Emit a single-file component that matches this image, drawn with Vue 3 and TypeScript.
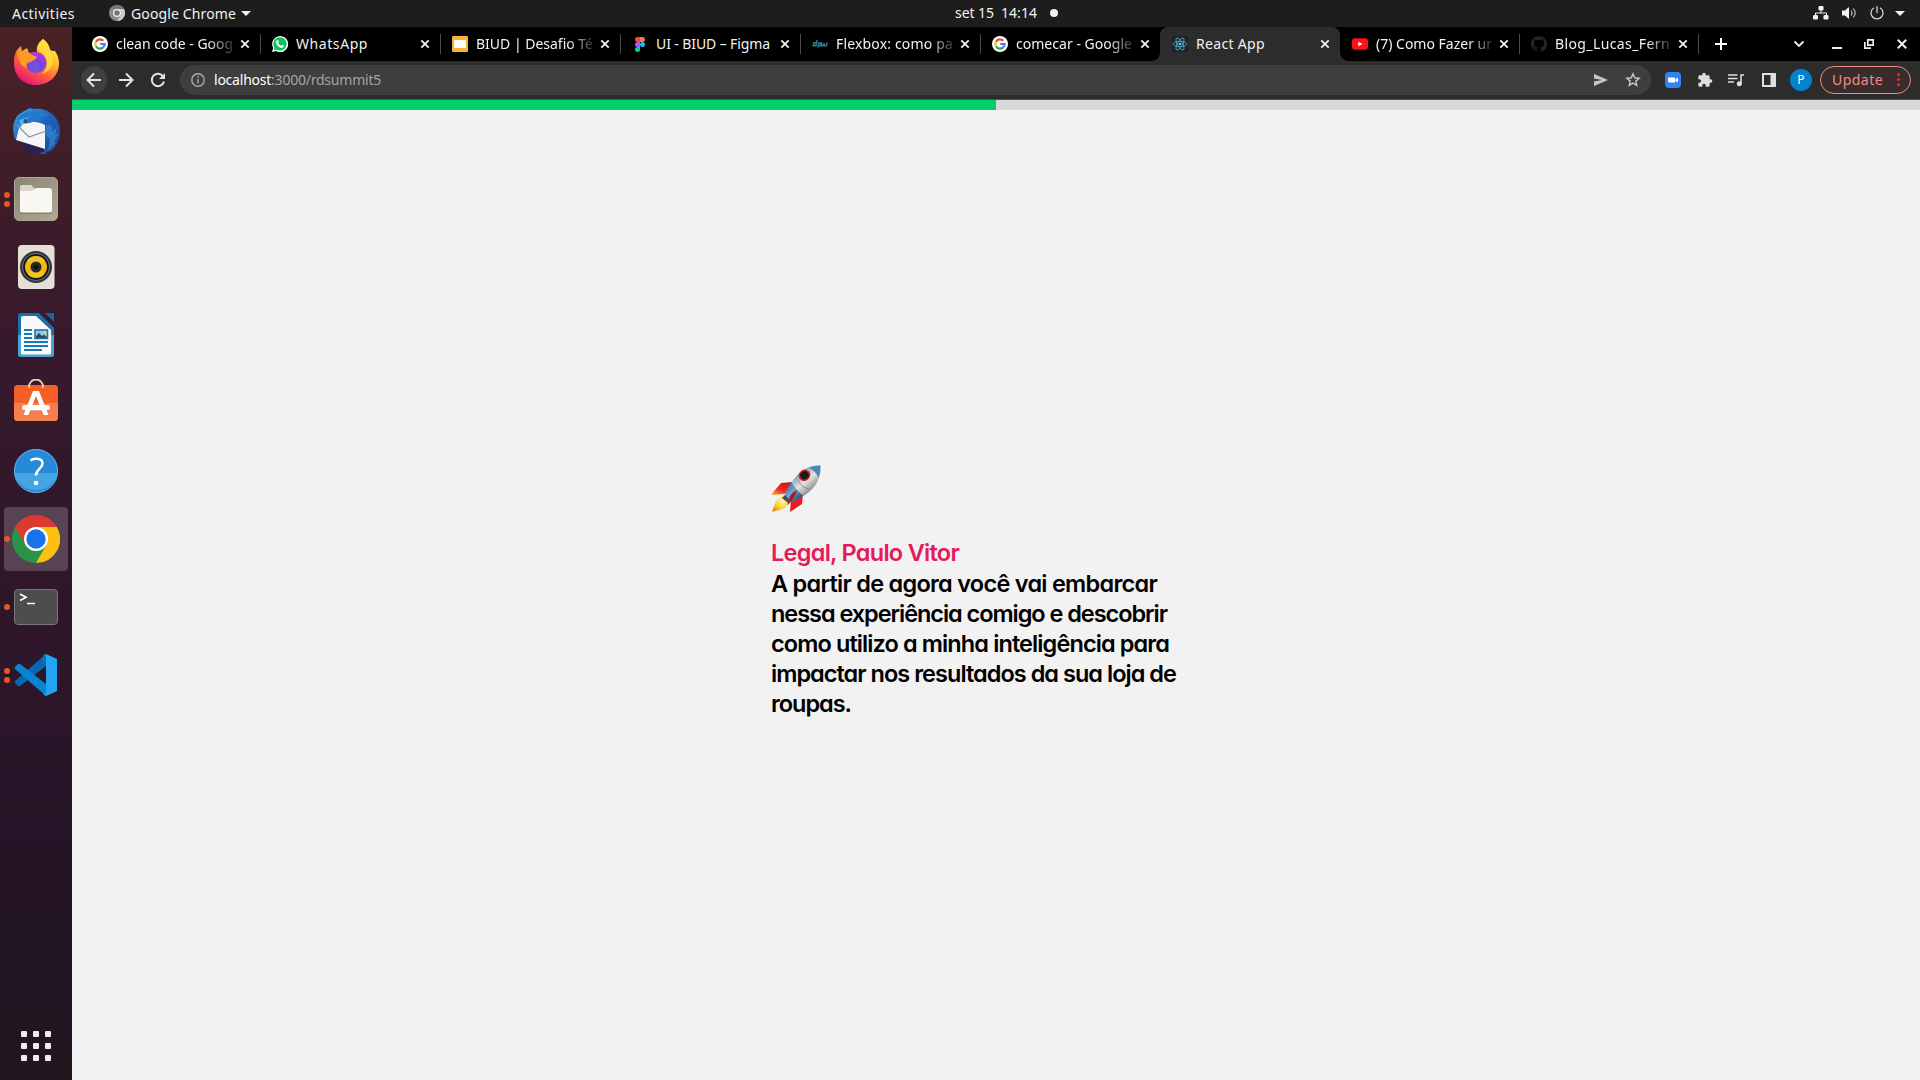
<script setup lang="ts">
import type { Directive } from 'vue'

interface Tab {
  icon: string
  title: string
  width: number
  span: number
  active?: boolean
}

interface DockItem {
  name: string
  dots: number
  active?: boolean
}

const tabs: Tab[] = [
  { icon: 'google', title: 'clean code - Goog', width: 180, span: 117 },
  { icon: 'whatsapp', title: 'WhatsApp', width: 180, span: 72 },
  { icon: 'slides', title: 'BIUD | Desafio Té', width: 180, span: 117 },
  { icon: 'figma', title: 'UI - BIUD – Figma', width: 180, span: 114 },
  { icon: 'dpw', title: 'Flexbox: como pa', width: 180, span: 117 },
  { icon: 'google', title: 'comecar - Google', width: 180, span: 116 },
  { icon: 'react', title: 'React App', width: 180, span: 69, active: true },
  { icon: 'youtube', title: '(7) Como Fazer ur', width: 179, span: 116 },
  { icon: 'github', title: 'Blog_Lucas_Fern', width: 179, span: 115 },
]

const dock: DockItem[] = [
  { name: 'firefox', dots: 0 },
  { name: 'thunderbird', dots: 0 },
  { name: 'files', dots: 2 },
  { name: 'rhythmbox', dots: 0 },
  { name: 'writer', dots: 0 },
  { name: 'software', dots: 0 },
  { name: 'help', dots: 0 },
  { name: 'chrome', dots: 1, active: true },
  { name: 'terminal', dots: 1 },
  { name: 'code', dots: 2 },
]

const message = [
  { text: 'A partir de agora você vai embarcar', span: 386 },
  { text: 'nessa experiência comigo e descobrir', span: 396 },
  { text: 'como utilizo a minha inteligência para', span: 398 },
  { text: 'impactar nos resultados da sua loja de', span: 405 },
  { text: 'roupas.', span: 80 },
]

/* Tracks a single line of text so that it fills the given width. */
const vFit: Directive<HTMLElement, number> = {
  mounted(el, { value }) {
    const count = (el.textContent ?? '').length
    const natural = el.getBoundingClientRect().width
    el.style.letterSpacing = `${(value - natural) / count}px`
  },
}
</script>

<template>
  <div class="desktop">
    <header class="topbar">
      <div class="top-left">
        <span v-fit="63" class="activities">Activities</span>
        <svg class="app-icon" width="16" height="16" viewBox="0 0 16 16">
          <circle cx="8" cy="8" r="8" fill="#8b8b8b" />
          <path d="M8 4h7A8 8 0 0 1 8 16l4-6z" fill="#c9c9c9" />
          <path d="M1 4a8 8 0 0 1 14 0H8z" fill="#777" />
          <circle cx="8" cy="8" r="4" fill="#f2f2f2" />
          <circle cx="8" cy="8" r="2.8" fill="#777" />
        </svg>
        <span v-fit="105">Google Chrome</span>
        <i class="caret" />
      </div>
      <div class="clock">
        <span v-fit="39">set 15</span>
        <span v-fit="36" class="time">14:14</span>
        <i class="notice" />
      </div>
      <div class="status">
        <svg width="16" height="14" viewBox="0 0 16 14" fill="#f2f2f2">
          <rect x="5.5" y="0" width="5" height="4.4" rx="1" />
          <rect x="0" y="9" width="5" height="4.4" rx="1.2" />
          <rect x="10.5" y="9" width="5" height="4.4" rx="1.2" />
          <path d="M2.5 9.5V7h11v2.5M8 4v3" fill="none" stroke="#f2f2f2" />
        </svg>
        <svg class="volume" width="15" height="14" viewBox="0 0 15 14">
          <path d="M0 4.5h3L7 1v12L3 9.500H0z" fill="#f2f2f2" />
          <path d="M9 4.500q2 2.500 0 5M11.200 2.500q4 4.500 0 9" fill="none" stroke="#c8c8c8" stroke-width="1.100" />
        </svg>
        <svg class="power" width="14" height="14" viewBox="0 0 14 14" fill="none" stroke="#dedede" stroke-width="1.200">
          <path d="M4 1.700a6 6 0 1 0 6 0M7 0v7" />
        </svg>
        <i class="caret" />
      </div>
    </header>

    <div class="workspace">
      <nav class="dock">
        <div v-for="item in dock" :key="item.name" class="dock-item" :class="{ current: item.active }">
          <div class="dots"><i v-for="n in item.dots" :key="n" /></div>
          <svg v-if="item.name === 'firefox'" width="48" height="48" viewBox="0 1 48 48">
            <defs>
              <linearGradient id="ffBody" x1=".85" y1=".1" x2=".3" y2="1">
                <stop offset="0" stop-color="#fff14c" /><stop offset=".35" stop-color="#ffb52b" />
                <stop offset=".65" stop-color="#ff5a3c" /><stop offset="1" stop-color="#e5127e" />
              </linearGradient>
              <radialGradient id="ffOrb" cx=".45" cy=".75" r=".75">
                <stop offset="0" stop-color="#6a5bdd" /><stop offset=".5" stop-color="#7c42e0" /><stop offset="1" stop-color="#b833e1" />
              </radialGradient>
            </defs>
            <path d="M31 1c4 3 6 6 7 11 2 1 4 1 5 1 2 3 4 7 4 12 0 13-10 22-23 22S2 38 2 25c0-6 1-11 4-14l3-3 1 5 5-3 2 5 8-1c-1-6 2-10 6-13z" fill="url(#ffBody)" />
            <circle cx="24" cy="24.500" r="10.500" fill="url(#ffOrb)" />
            <path d="M6 15c5-3 9-2 12 1l7 3c-1 3-4 3-6 5-4 0-5 3-4 6-6-1-9-8-9-15z" fill="#ff9a28" />
            <path d="M31 1c4 3 6 6 7 11 5 10 4 20-8 24 6-6 7-13 2-19-5-4-8-8-1-16z" fill="#ffdc3e" opacity=".8" />
          </svg>
          <svg v-else-if="item.name === 'thunderbird'" width="48" height="48" viewBox="0 0 48 48">
            <defs>
              <linearGradient id="tbBody" x1="0" y1="0" x2="1" y2="1">
                <stop offset="0" stop-color="#3da5e8" /><stop offset=".5" stop-color="#1d62bd" /><stop offset="1" stop-color="#1b4a9a" />
              </linearGradient>
            </defs>
            <path d="M18 1l4 1c14-2 26 8 26 22 0 8-3 15-9 20l-5 1 1 2-9 0 6-3 1-8L3 32C1 25-1 17 6 8l6-4z" fill="url(#tbBody)" />
            <path d="M6 33l27 11-9 3-7-1z" fill="#26205b" />
            <path d="M8 17c8-3 17-3 25 1v24L4 33z" fill="#f5f5f6" />
            <path d="M5 18l12 12 17-6" fill="none" stroke="#8f969e" stroke-width="1.200" />
            <path d="M5 12C13 2 29 1 38 9 30 7 24 14 18 16l-8 1-2 4z" fill="#257acb" />
            <path d="M7 13l10-3-6 7-2 3z" fill="#4db7ed" />
            <circle cx="13.500" cy="14" r="2" fill="#374b62" />
            <path d="M34 19c4-3 7 0 6 6l5-5-2 8 4-2-5 9 2 1-8 8 2-12-4-3z" fill="#3f8edb" opacity=".6" />
          </svg>
          <svg v-else-if="item.name === 'files'" width="48" height="48" viewBox="0 0 48 48">
            <defs>
              <linearGradient id="flBody" x1="0" y1="0" x2="1" y2="1">
                <stop offset="0" stop-color="#888472" /><stop offset="1" stop-color="#b0aa94" />
              </linearGradient>
            </defs>
            <rect x="2.500" y="2.500" width="43" height="43" rx="4.500" fill="url(#flBody)" stroke="#aaa797" />
            <path d="M8 12q0-2 2-2h9l4 4h15v6H8z" fill="#d9d5c8" />
            <path d="M8 17h12l4-4h14q2 0 2 2v20q0 3-2.500 3h-27Q8 38 8 35z" fill="#5d5948" opacity=".4" transform="translate(0 1)" />
            <path d="M8 16h12l4-3h13q3 0 3 3v19q0 2.500-2.500 2.500h-27Q8 37.500 8 35z" fill="#f8f7f4" />
          </svg>
          <svg v-else-if="item.name === 'rhythmbox'" width="48" height="48" viewBox="0 0 48 48">
            <rect x="6" y="2" width="36.500" height="44" rx="4" fill="#e5e0d6" />
            <circle cx="24" cy="24" r="16" fill="#35363c" />
            <circle cx="24" cy="24" r="13.500" fill="#16161a" stroke="#70727b" />
            <circle cx="24" cy="24" r="11" fill="#edb812" />
            <path d="M24 24L15 17.500A11 11 0 0 1 33 17.500zM24 24l8 7.500a11 11 0 0 1-16 0z" fill="#ffdc3c" opacity=".35" />
            <circle cx="24" cy="24" r="5.500" fill="#2b2926" />
            <circle cx="24" cy="24" r="2.500" fill="#111" />
          </svg>
          <svg v-else-if="item.name === 'writer'" width="48" height="48" viewBox="0 0 48 48">
            <path d="M9 2h18l15 15v26q0 3-3 3H9q-3 0-3-3V5q0-3 3-3z" fill="#1871a8" />
            <path d="M6 24h36v19q0 3-3 3H9q-3 0-3-3z" fill="#4aa5d5" />
            <path d="M33 2h9v9z" fill="#15689b" />
            <path d="M11 5h13l15 14v23q0 1.500-1.500 1.500h-27Q9 43.500 9 42V7q0-2 2-2z" fill="#fafafa" />
            <path d="M12 19h8M12 23h8M12 27h8M12 31h24M12 35h24M12 39h18" stroke="#167ab6" stroke-width="2" />
            <rect x="23" y="19" width="12.500" height="8.500" fill="#8acbf0" stroke="#167ab6" stroke-width="1.600" />
            <path d="M24 27v-2l3-3 3 3 2-1.500 3 3v.5z" fill="#444" />
            <circle cx="33" cy="21.500" r="1.500" fill="#f4cf31" />
          </svg>
          <svg v-else-if="item.name === 'software'" width="48" height="48" viewBox="0 0 48 48">
            <rect x="2" y="6" width="44" height="36" rx="3.500" fill="#f35f25" />
            <path d="M2 24h44v14q0 4-3.500 4h-37Q2 42 2 38z" fill="#f47e4c" />
            <path d="M17 9V7.500a7 7 0 0 1 14 0V9" fill="none" stroke="#edcfa5" stroke-width="1.800" />
            <path d="M21 12h6l9.500 24h-5L24 17l-7.500 19h-5z" fill="#fff" />
            <rect x="10" y="26" width="28" height="5" rx="2.500" fill="#fff" />
            <path d="M18.500 31.500h11" stroke="#d8a995" />
          </svg>
          <svg v-else-if="item.name === 'help'" width="48" height="48" viewBox="0 0 48 48">
            <circle cx="24" cy="24" r="22" fill="#2589d8" />
            <path d="M2.500 26h43a22 22 0 0 1-43 0z" fill="#46a4e3" />
            <circle cx="24" cy="24" r="21.500" fill="none" stroke="#65aee2" />
            <path d="M18.500 13.500c3-2.500 12-3 12 3 0 5-6.500 5.500-6.500 12" fill="none" stroke="#fff" stroke-width="2.600" />
            <circle cx="24" cy="36" r="2.300" fill="#fff" />
          </svg>
          <svg v-else-if="item.name === 'chrome'" width="48" height="48" viewBox="0 0 48 48">
            <circle cx="24" cy="24" r="24" fill="#2b9348" />
            <path d="M24 12h20.800A24 24 0 0 1 24 48l10.400-18z" fill="#fcbf12" />
            <path d="M3.200 12a24 24 0 0 1 41.600 0H24L13.600 30z" fill="#dc3a2d" />
            <circle cx="24" cy="24" r="12" fill="#fff" />
            <circle cx="24" cy="24" r="9.700" fill="#1a73e8" />
          </svg>
          <svg v-else-if="item.name === 'terminal'" width="48" height="48" viewBox="0 0 48 48">
            <rect x="2.500" y="6.500" width="43" height="35" rx="3.500" fill="#4d4d4d" stroke="#777" />
            <path d="M8 11l6 3.200-6 3.200" fill="none" stroke="#fff" stroke-width="1.700" />
            <path d="M15 20.500h8" stroke="#fff" stroke-width="1.500" />
          </svg>
          <svg v-else width="48" height="48" viewBox="0 0 48 48">
            <path d="M34 3v12L8 35q-1 .7-2 0l-3-3q-1-1 0-2z" fill="#0869ae" />
            <path d="M34 45V33L8 13q-1-.7-2 0l-3 3q-1 1 0 2z" fill="#0a83d0" />
            <path d="M34 3l11 5v32l-11 5-3-2q3 0 3-2V7q0-2-3-2z" fill="#23a4f2" />
            <path d="M34 3L29 8l5 4z" fill="#0a74ba" />
          </svg>
        </div>
        <div class="apps"><i v-for="n in 9" :key="n" /></div>
      </nav>

      <section class="browser">
        <div class="tabstrip">
          <div v-for="(tab, i) in tabs" :key="i" class="tab" :class="{ active: tab.active, bare: i === 5 }" :style="{ width: tab.width + 'px' }">
            <svg v-if="tab.icon === 'google'" width="16" height="16" viewBox="0 0 16 16">
              <circle cx="8" cy="8" r="8" fill="#fff" />
              <g fill="none" stroke-width="2.200">
                <path d="M11.300 4.700A4.700 4.700 0 0 0 3.900 5.700" stroke="#ea4335" />
                <path d="M3.900 5.700a4.700 4.700 0 0 0 0 4.600" stroke="#fbbc05" />
                <path d="M3.900 10.300a4.700 4.700 0 0 0 7.200 1.100" stroke="#34a853" />
                <path d="M11.100 11.400A4.700 4.700 0 0 0 12.700 8H8.200" stroke="#4285f4" />
              </g>
            </svg>
            <svg v-else-if="tab.icon === 'whatsapp'" width="16" height="16" viewBox="0 0 16 16">
              <path d="M0 16l1.200-4A8 8 0 1 1 4 14.900z" fill="#fff" />
              <path d="M1.700 14.300l.8-2.700a6.600 6.600 0 1 1 2 1.900z" fill="#05c655" />
              <path d="M5 4.200l1-.2 1 2-.8 1q1 2 2.800 2.700l1-1 2 1q0 2-2 2.200C7.500 12 4 9 4 6q0-1 1-1.800z" fill="#fff" />
            </svg>
            <svg v-else-if="tab.icon === 'slides'" width="16" height="16" viewBox="0 0 16 16">
              <rect width="16" height="16" rx="1.300" fill="#f9b233" />
              <rect x="2" y="4" width="12" height="8" fill="#fff" />
            </svg>
            <svg v-else-if="tab.icon === 'figma'" width="16" height="16" viewBox="0 0 16 16">
              <path d="M8 1H5.500a2.500 2.500 0 0 0 0 5H8z" fill="#f24e1e" />
              <path d="M8 1h2.500a2.500 2.500 0 0 1 0 5H8z" fill="#ff7262" />
              <path d="M8 6H5.500a2.500 2.500 0 0 0 0 5H8z" fill="#a259ff" />
              <circle cx="10.500" cy="8.500" r="2.500" fill="#1abcfe" />
              <path d="M8 11H5.500A2.500 2.500 0 1 0 8 13.500z" fill="#0acf83" />
            </svg>
            <svg v-else-if="tab.icon === 'dpw'" width="16" height="16" viewBox="0 0 16 16" fill="none" stroke="#327d95" stroke-width="1.500">
              <path d="M5 4L4 9.700H1.200L1.700 7h3M6 11.500L6.800 7h2.400L8.700 9.700H6.200M10 6.500l-.3 3.200h2l.6-2.500-.3 2.500h2.300L15.300 6.500" />
            </svg>
            <svg v-else-if="tab.icon === 'react'" width="16" height="16" viewBox="0 0 16 16">
              <rect width="16" height="16" rx="1.500" fill="#20232a" />
              <g fill="none" stroke="#4bb5d0" stroke-width=".8">
                <ellipse cx="8" cy="8" rx="6.700" ry="2.600" />
                <ellipse cx="8" cy="8" rx="6.700" ry="2.600" transform="rotate(60 8 8)" />
                <ellipse cx="8" cy="8" rx="6.700" ry="2.600" transform="rotate(120 8 8)" />
              </g>
              <circle cx="8" cy="8" r="1.300" fill="#61dafb" />
            </svg>
            <svg v-else-if="tab.icon === 'youtube'" width="16" height="16" viewBox="0 0 16 16">
              <rect y="2.300" width="16" height="11.500" rx="3" fill="#ff0f1c" />
              <path d="M6.300 5.700v4.600L10.500 8z" fill="#fff" />
            </svg>
            <svg v-else width="16" height="16" viewBox="0 0 16 16">
              <path d="M8 0C3.580 0 0 3.580 0 8c0 3.540 2.290 6.530 5.470 7.590.4.070.55-.17.55-.38v-1.490c-2.010.37-2.530-.49-2.690-.94-.09-.23-.48-.94-.82-1.130-.28-.15-.68-.52-.01-.53.630-.01 1.080.58 1.230.82.720 1.210 1.870.87 2.330.66.070-.52.280-.87.510-1.070-1.780-.2-3.640-.89-3.640-3.950 0-.87.310-1.590.82-2.150-.08-.2-.36-1.020.08-2.120 0 0 .67-.21 2.200.82a7.500 7.500 0 0 1 4 0c1.530-1.040 2.200-.82 2.200-.82.440 1.100.160 1.920.08 2.120.51.560.82 1.270.82 2.150 0 3.070-1.870 3.750-3.650 3.950.29.250.54.730.54 1.480v2.190c0 .21.150.46.550.38A8 8 0 0 0 16 8c0-4.420-3.580-8-8-8z" fill="#20262c" />
            </svg>
            <div class="title"><span v-fit="tab.span">{{ tab.title }}</span></div>
            <svg class="close" width="10" height="10" viewBox="0 0 10 10"><path d="M1.300 1.300l7.400 7.400M8.700 1.300L1.300 8.700" stroke="#f1f1f1" stroke-width="1.800" /></svg>
          </div>
          <svg class="new-tab" width="12" height="12" viewBox="0 0 12 12"><path d="M6 0v12M0 6h12" stroke="#fff" stroke-width="2" /></svg>
          <div class="window-controls">
            <svg width="12" height="12" viewBox="0 0 12 12"><path d="M1.500 3.500L6 8l4.500-4.500" fill="none" stroke="#eee" stroke-width="1.800" /></svg>
            <svg class="minimize" width="10" height="12" viewBox="0 0 10 12"><path d="M0 10h10" stroke="#eee" stroke-width="2" /></svg>
            <svg class="restore" width="10" height="10" viewBox="0 0 10 10" fill="none" stroke="#eee" stroke-width="1.700"><path d="M3.800.8h5.400v5.400H3.800zM.8 3v6.200H7" /></svg>
            <svg class="exit" width="10" height="10" viewBox="0 0 10 10"><path d="M.8.8l8.400 8.400M9.200.8L.8 9.200" stroke="#eee" stroke-width="2" /></svg>
          </div>
        </div>

        <div class="toolbar">
          <div class="back">
            <svg width="16" height="16" viewBox="0 0 16 16"><path d="M15 8H2M8 1.500L1.500 8 8 14.500" /></svg>
          </div>
          <svg class="nav forward" width="16" height="16" viewBox="0 0 16 16"><path d="M1 8h13M8 1.500L14.500 8 8 14.500" /></svg>
          <svg class="nav" width="16" height="16" viewBox="0 0 16 16">
            <path d="M13.200 4.500A6.200 6.200 0 1 0 14 9.500" /><path d="M15 1v6H9z" class="solid" />
          </svg>
          <div class="address">
            <svg width="14" height="14" viewBox="0 0 14 14">
              <circle cx="7" cy="7" r="6.200" fill="none" stroke="#a9acb0" stroke-width="1.400" />
              <path d="M7 6v4.500M7 3.300v1.500" stroke="#a9acb0" stroke-width="1.500" />
            </svg>
            <span v-fit="167" class="url"><b>localhost</b>:3000/rdsummit5</span>
            <svg class="send" width="14" height="12" viewBox="0 0 14 12"><path d="M0 0l14 6-14 6V7.500L8 6 0 4.500z" fill="#c5c7c9" /></svg>
            <svg class="star" width="16" height="16" viewBox="0 0 16 16"><path d="M8 1.800l1.700 4 4.500.4-3.400 2.900 1 4.300L8 11.100l-3.800 2.300 1-4.300-3.400-2.900 4.500-.4z" fill="none" stroke="#c5c7c9" stroke-width="1.400" /></svg>
          </div>
          <svg class="zoom" width="16" height="16" viewBox="0 0 16 16">
            <rect width="16" height="16" rx="4" fill="#2f83f6" />
            <path d="M3 5.500h6q1.300 0 1.300 1.300v3.700H4.500Q3 10.500 3 9zM10.800 7l2.200-1.500v5L10.800 9z" fill="#fff" />
          </svg>
          <svg class="puzzle" width="16" height="16" viewBox="0 0 24 24"><path d="M20.500 11H19V7a2 2 0 0 0-2-2h-4V3.500a2.500 2.500 0 0 0-5 0V5H4a2 2 0 0 0-2 2v3.800h1.500a2.700 2.700 0 0 1 0 5.400H2V20c0 1.100.9 2 2 2h3.800v-1.500a2.700 2.700 0 0 1 5.400 0V22H17a2 2 0 0 0 2-2v-4h1.500a2.500 2.500 0 0 0 0-5z" fill="#dedede" /></svg>
          <svg class="media" width="16" height="14" viewBox="0 0 16 14">
            <path d="M0 2h9.500M0 5.500h9.500M0 9h6M13 11V2h3" fill="none" stroke="#dedede" stroke-width="1.600" />
            <circle cx="11.300" cy="10.800" r="2.500" fill="#dedede" />
          </svg>
          <svg class="panel" width="14" height="14" viewBox="0 0 14 14"><path fill-rule="evenodd" d="M0 0h14v14H0zM2 2h6.500v10H2z" fill="#dedede" /></svg>
          <div class="avatar">P</div>
          <div class="update">
            <span v-fit="51">Update</span>
            <div class="menu"><i /><i /><i /></div>
          </div>
        </div>

        <main class="page">
          <div class="progress"><div class="bar" /></div>
          <article class="welcome">
            <svg class="rocket" width="50" height="48" viewBox="0 0 50 48">
              <defs>
                <linearGradient id="hull" x1=".2" y1=".15" x2=".75" y2=".8">
                  <stop offset="0" stop-color="#55697d" /><stop offset=".3" stop-color="#9db2c3" />
                  <stop offset=".55" stop-color="#e4e4e1" /><stop offset=".8" stop-color="#aaa9a6" /><stop offset="1" stop-color="#5b6269" />
                </linearGradient>
                <linearGradient id="hullBlue" x1=".1" y1=".1" x2=".8" y2=".9">
                  <stop offset="0" stop-color="#3d6a92" /><stop offset=".5" stop-color="#75a9d0" /><stop offset="1" stop-color="#22496d" />
                </linearGradient>
                <linearGradient id="fin" x1=".7" y1="0" x2=".2" y2="1">
                  <stop offset="0" stop-color="#bd1720" /><stop offset=".6" stop-color="#f8291c" /><stop offset="1" stop-color="#ff9a2c" />
                </linearGradient>
                <radialGradient id="flame" cx=".6" cy=".35" r=".7">
                  <stop offset="0" stop-color="#fff6ab" /><stop offset=".6" stop-color="#f8d32e" /><stop offset="1" stop-color="#ed851b" />
                </radialGradient>
              </defs>
              <path d="M22 17l-12 1L0 30l14-1z" fill="url(#fin)" />
              <path d="M32 29l-1 10-12 8 1-12z" fill="#ed1c24" />
              <path d="M13 30L5 36 1 47l13-4 5-8z" fill="url(#flame)" />
              <path d="M49.500.5C51 14 43 26 27 34q-5 3-7 2l-6-5q0-4 6-12C26 7 37-.5 49.500.5z" fill="url(#hull)" />
              <path d="M20 17q4 6 12 14l-5 3q-5 3-7 2l-6-5q0-4 6-14z" fill="url(#hullBlue)" />
              <path d="M38 2.700Q44 .3 49.500.5q.5 6.500-2 12.500Q45 6 38 2.700z" fill="#4d86b7" />
              <path d="M27 14q2 8 11 10" fill="none" stroke="#777d80" stroke-width=".7" />
              <path d="M14 30l5 5-2 3-6-5z" fill="#40506a" />
              <path d="M19 31q4-5 7-6-2 7-8 14l-2 1q3-4 3-9z" fill="#a81721" />
              <ellipse cx="33.500" cy="10.300" rx="6" ry="5.500" fill="#c6202c" transform="rotate(-35 33.500 10.300)" />
              <ellipse cx="33.500" cy="10.300" rx="4.200" ry="3.900" fill="#141a1d" transform="rotate(-35 33.500 10.300)" />
            </svg>
            <p class="hello"><span v-fit="188">Legal, Paulo Vitor</span></p>
            <p v-for="line in message" :key="line.text"><span v-fit="line.span">{{ line.text }}</span></p>
          </article>
        </main>
      </section>
    </div>
  </div>
</template>

<style>
body {
  margin: 0;
  overflow: hidden;
}
</style>

<style scoped>
.desktop {
  width: 1920px;
  height: 1080px;
  display: flex;
  flex-direction: column;
  font-family: "Noto Sans", sans-serif;
  font-size: 14px;
  color: #f2f2f2;
  white-space: nowrap;
}
svg { display: block; flex: none; }
i { display: block; flex: none; }

.topbar {
  height: 27px;
  flex: none;
  background: #1d1d1d;
  display: grid;
  grid-template-columns: 940px 1fr 120px;
  line-height: 25px;
}
.top-left, .clock, .status { display: flex; align-items: center; }
.top-left { padding: 0 0 1px 12px; }
.app-icon { margin: 0 6px 0 34px; }
.caret {
  border: 5px solid transparent;
  border-top-color: #f2f2f2;
  border-bottom: 0;
  margin-left: 5px;
}
.clock { padding: 0 0 2px 15px; }
.time { margin-left: 7px; }
.notice { width: 8px; height: 8px; border-radius: 50%; background: #f2f2f2; margin-left: 13px; }
.status { padding: 0 0 1px 13px; }
.volume { margin-left: 13px; }
.power { margin-left: 13px; }
.status .caret { margin-left: 11px; }

.workspace { display: flex; flex: 1; min-height: 0; }
.dock {
  width: 72px;
  flex: none;
  box-sizing: border-box;
  padding: 2px 0 18px;
  display: flex;
  flex-direction: column;
  background: linear-gradient(#4a2225 0, #3f1d29 14%, #36192c 32%, #2c162a 62%, #251427 78%, #21151d 100%);
}
.dock-item {
  height: 64px;
  margin: 2px 4px;
  display: flex;
  align-items: center;
  border-radius: 4px;
}
.dock-item.current { background: #574353; }
.dots {
  width: 8px;
  display: flex;
  flex-direction: column;
  align-items: center;
  gap: 3px;
}
.dots i { width: 6px; height: 6px; border-radius: 50%; background: #e95420; margin-right: 2px; }
.apps {
  margin: auto auto 0;
  display: grid;
  grid-template-columns: repeat(3, 6px);
  gap: 6px;
  padding-bottom: 1px;
}
.apps i { width: 6px; height: 6px; border-radius: 1px; background: #f0eeeb; }

.browser { flex: 1; min-width: 0; display: flex; flex-direction: column; }
.tabstrip {
  height: 34px;
  flex: none;
  background: #000;
  padding-left: 8px;
  display: flex;
  align-items: center;
}
.tab {
  position: relative;
  height: 34px;
  flex: none;
  box-sizing: border-box;
  padding: 0 10px 0 12px;
  display: flex;
  align-items: center;
}
.tab::after {
  content: "";
  position: absolute;
  right: -1px;
  top: 7px;
  width: 1px;
  height: 20px;
  background: #4c4c4c;
}
.tab.bare::after { display: none; }
.title {
  width: 118px;
  margin-left: 8px;
  padding-bottom: 2px;
  -webkit-mask-image: linear-gradient(90deg, #000 78%, rgba(0, 0, 0, 0.15));
  mask-image: linear-gradient(90deg, #000 78%, rgba(0, 0, 0, 0.15));
}
.tab:nth-child(2) .title,
.tab:nth-child(4) .title,
.tab.active .title { -webkit-mask-image: none; mask-image: none; }
.close { margin-left: 6px; }
.tab.active { background: #2c2c2c; border-radius: 8px 8px 0 0; }
.tab.active::before,
.tab.active::after {
  content: "";
  display: block;
  position: absolute;
  top: auto;
  bottom: 0;
  width: 8px;
  height: 8px;
}
.tab.active::before { left: -8px; background: radial-gradient(circle at 0 0, #000 7.5px, #2c2c2c 8px); }
.tab.active::after { right: -8px; background: radial-gradient(circle at 100% 0, #000 7.5px, #2c2c2c 8px); }
.new-tab { margin-left: 17px; }
.window-controls { margin-left: auto; padding-right: 13px; display: flex; align-items: center; }
.minimize { margin-left: 27px; }
.restore { margin-left: 22px; }
.exit { margin-left: 23px; }

.toolbar {
  height: 39px;
  flex: none;
  box-sizing: border-box;
  border-bottom: 1px solid #535353;
  background: #2c2c2c;
  display: flex;
  align-items: center;
  padding: 0 9px;
}
.back {
  width: 26px;
  height: 28px;
  border-radius: 14px;
  background: #3f3f3f;
  display: flex;
  align-items: center;
  justify-content: center;
}
.back path, .nav path { fill: none; stroke: #e3e3e3; stroke-width: 2; }
.nav { margin-right: 14px; }
.nav .solid { fill: #e3e3e3; stroke: none; }
.forward { margin: 0 16px 0 11px; }
.address {
  width: 1471px;
  height: 30px;
  flex: none;
  box-sizing: border-box;
  border-radius: 15px;
  background: #3e3e3e;
  display: flex;
  align-items: center;
  padding: 0 10px 0 11px;
}
.url { margin-left: 9px; padding-bottom: 2px; color: #a4a4a4; }
.url b { color: #fff; font-weight: 400; }
.send { margin-left: auto; }
.star { margin-left: 17px; }
.zoom { margin-left: 14px; }
.puzzle { margin-left: 16px; }
.media { margin-left: 15px; }
.panel { margin-left: 18px; }
.avatar {
  width: 22px;
  height: 22px;
  flex: none;
  border-radius: 50%;
  background: #0283cc;
  color: #fff;
  margin-left: 14px;
  font-size: 12px;
  line-height: 22px;
  text-align: center;
}
.update {
  width: 91px;
  height: 28px;
  flex: none;
  box-sizing: border-box;
  margin-left: 8px;
  border: 1px solid #f28b82;
  border-radius: 14px;
  background: #392c2d;
  color: #f28b82;
  display: flex;
  align-items: center;
  padding: 0 10px 1px 11px;
}
.menu { display: flex; flex-direction: column; gap: 2px; margin-left: auto; }
.menu i { width: 3px; height: 3px; border-radius: 50%; background: #e8302a; }

.page { flex: 1; background: #f2f2f2; }
.progress { height: 10px; background: #d9d9d9; }
.bar { width: 50%; height: 10px; background: #00cf6b; }
.welcome {
  width: 450px;
  padding: 355px 0 0 699px;
  font: 600 23.5px/30px Inter, sans-serif;
  font-feature-settings: "cv11";
  color: #000;
}
.rocket { margin-bottom: 25px; }
.welcome p { margin: 0; }
.welcome .hello { color: #e31b5b; margin-bottom: 1px; }
</style>
